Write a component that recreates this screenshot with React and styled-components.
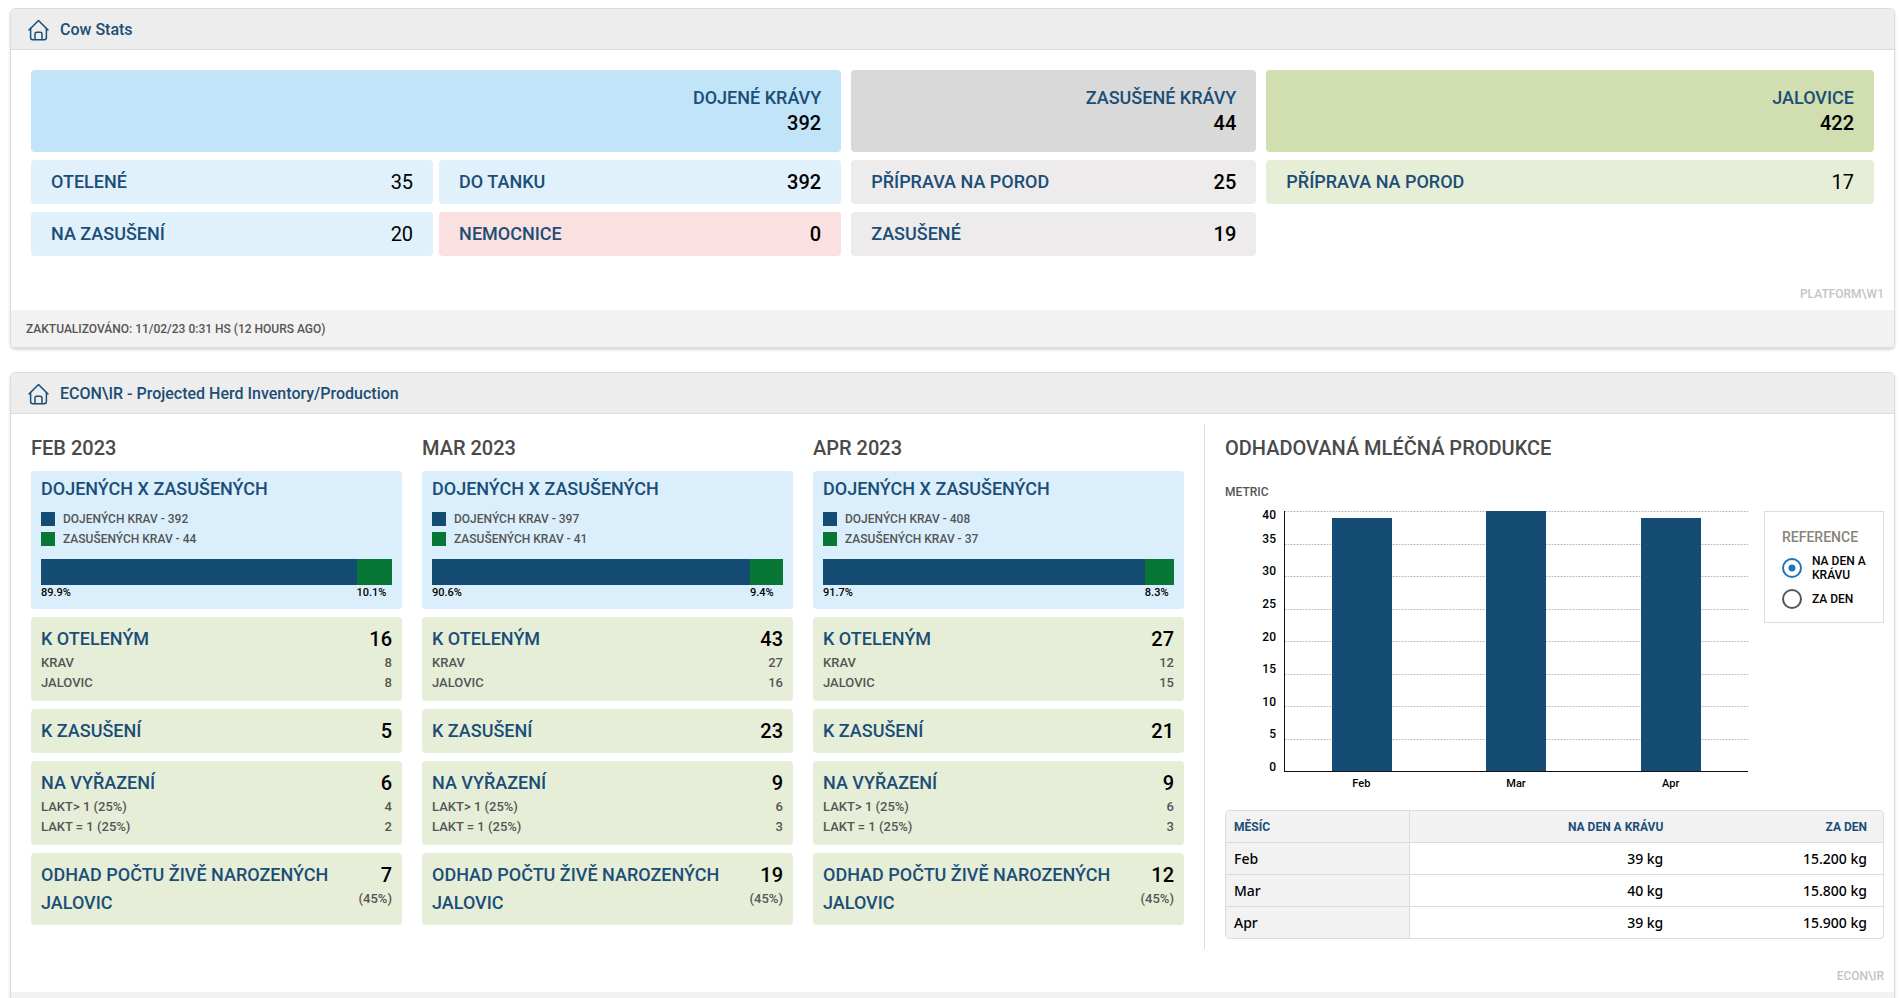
import React, { useState } from 'react';
import styled, { createGlobalStyle, css } from 'styled-components';

const color = {
  blue: '#1b4e77',
  bar: '#154c74',
  green: '#087735',
  line: '#dcdcdc',
  grey: '#555555',
};

const tones = {
  milking: '#c1e4f8',
  milkingSoft: '#e0f1fc',
  hospital: '#fae0e0',
  dry: '#d9d9d9',
  drySoft: '#edebeb',
  heifers: '#d1deaf',
  heifersSoft: '#e7eed8',
  ratio: '#daeffb',
};

const GlobalStyle = createGlobalStyle`
  *, *::before, *::after { box-sizing: border-box; }
  body {
    margin: 0;
    background: #fff;
    color: #000;
    font-family: Roboto, "Noto Sans", sans-serif;
    font-weight: 500;
  }
`;

const Page = styled.main`
  height: 100vh;
  overflow: hidden;
  padding: 8px 8px 0 10px;
  display: flex;
  flex-direction: column;
  gap: 24px;
`;

const Card = styled.section`
  flex: none;
  border: 1px solid ${color.line};
  border-radius: 5px;
  box-shadow: 0 2px 3px rgba(0, 0, 0, 0.15);
  overflow: hidden;
`;

const CardHeader = styled.header`
  display: flex;
  align-items: center;
  gap: 11px;
  height: 41px;
  padding: 1px 17px 0;
  background: #ededed;
  border-bottom: 1px solid ${color.line};
  color: ${color.blue};
`;

const CardTitle = styled.h2`
  margin: 0;
  font-size: 16px;
  line-height: 20px;
  font-weight: 500;
`;

const CardFooter = styled.footer`
  height: 37px;
  padding: 0 15px;
  background: #f2f2f2;
  color: ${color.grey};
  font-size: 12px;
  line-height: 38px;
`;

const Watermark = styled.div`
  margin-top: 20px;
  padding: 0 10px 9px;
  color: #c4c4c4;
  font-size: 12px;
  line-height: 14px;
  text-align: right;
`;

const Stats = styled.div`
  display: grid;
  grid-template-columns: 4fr 2fr 3fr;
  align-items: start;
  gap: 10px;
  padding: 20px 20px 11px;
`;

const StatGroup = styled.div`
  display: grid;
  grid-template-columns: repeat(${(p) => p.$columns}, 1fr);
  gap: 8px 6px;
`;

const StatTotal = styled.div`
  grid-column: 1 / -1;
  height: 82px;
  padding: 15px 20px;
  border-radius: 4px;
  background: ${(p) => tones[p.$tone]};
  text-align: right;
`;

const StatTile = styled.div`
  display: flex;
  align-items: center;
  justify-content: space-between;
  height: 44px;
  padding: 0 20px;
  border-radius: 4px;
  background: ${(p) => tones[p.$tone]};
`;

const Label = styled.div`
  color: ${color.blue};
  font-size: 18px;
  line-height: 26px;
`;

const Value = styled.div`
  font-size: 20px;
  line-height: 24px;
  font-weight: ${(p) => (p.$light ? 400 : 500)};
`;

const Projection = styled.div`
  display: grid;
  grid-template-columns: 69fr 40fr;
  padding: 10px 10px 0 20px;
`;

const Months = styled.div`
  display: grid;
  grid-template-columns: repeat(3, 1fr);
  gap: 20px;
  padding: 12px 20px 0 0;
`;

const Month = styled.section`
  display: flex;
  flex-direction: column;
  gap: 8px;
`;

const SectionTitle = styled.h3`
  margin: 0 0 ${(p) => (p.$tight ? 2 : 24)}px;
  color: #4a4a4a;
  font-size: 20px;
  line-height: 25px;
  font-weight: 500;
`;

const Panel = styled.div`
  border-radius: 4px;
  background: ${(p) => tones[p.$tone]};
  ${(p) =>
    p.$tone === 'ratio'
      ? css`padding: 5px 10px 8px;`
      : css`padding: 8px 10px;`}
`;

const RatioLegend = styled.ul`
  list-style: none;
  margin: 7px 0 10px;
  padding: 0;
`;

const RatioKey = styled.li`
  display: flex;
  align-items: center;
  gap: 8px;
  height: 20px;
  color: ${color.grey};
  font-size: 12px;

  &::before {
    content: '';
    width: 14px;
    height: 14px;
    background: ${(p) => color[p.$swatch]};
  }
`;

const Ratio = styled.div`
  display: flex;
`;

const RatioPart = styled.div`
  font-size: 11px;
  line-height: 16px;
  white-space: nowrap;

  &::before {
    content: '';
    display: block;
    height: 26px;
    background: ${(p) => color[p.$swatch]};
  }
`;

const PanelRow = styled.div`
  display: flex;
  justify-content: space-between;
  gap: 10px;
`;

const PanelLabel = styled.div`
  color: ${color.blue};
  font-size: 18px;
  line-height: 28px;
`;

const PanelValue = styled.div`
  text-align: right;
  font-size: 20px;
  line-height: 28px;
`;

const Detail = styled.div`
  display: flex;
  justify-content: space-between;
  color: ${color.grey};
  font-size: 13px;
  line-height: 20px;
`;

const Production = styled.section`
  border-left: 1px solid ${color.line};
  padding: 12px 0 10px 20px;
`;

const Metric = styled.div`
  margin-bottom: 12px;
  color: ${color.grey};
  font-size: 12px;
  line-height: 14px;
`;

const ChartRow = styled.div`
  display: flex;
  align-items: flex-start;
`;

const AxisValues = styled.div`
  width: 59px;
  height: 261px;
  padding-right: 8px;
  display: grid;
  grid-auto-rows: 1fr;
  font-size: 12px;
  line-height: 9px;
  text-align: right;
`;

const AxisStep = styled.div`
  display: flex;
  flex-direction: column;
  justify-content: ${(p) => (p.$top ? 'space-between' : 'flex-end')};
`;

const Chart = styled.div`
  flex: 1;
`;

const Plot = styled.div`
  display: grid;
  height: 261px;
  border-left: 1px solid #111;
  border-bottom: 1px solid #111;
`;

const GridLines = styled.div`
  grid-area: 1 / 1;
  display: grid;
  grid-auto-rows: 1fr;
`;

const GridLine = styled.div`
  background: repeating-linear-gradient(90deg, #b4b4b4 0 1px, #e6e6e6 1px 3px) top / 100% 1px no-repeat;
`;

const Bars = styled.div`
  grid-area: 1 / 1;
  display: grid;
  grid-template-columns: repeat(3, 1fr);
  align-items: end;
  justify-items: center;
  z-index: 1;
`;

const Bar = styled.div`
  width: 60px;
  background: ${color.bar};
`;

const MonthNames = styled.div`
  display: grid;
  grid-template-columns: repeat(3, 1fr);
  margin-top: 5px;
  font-size: 11px;
  line-height: 14px;
  text-align: center;
`;

const Reference = styled.fieldset`
  width: 120px;
  margin: 0 0 0 16px;
  padding: 15px 10px 13px 17px;
  border: 1px solid ${color.line};
  display: flex;
  flex-direction: column;
  gap: 7px;
`;

const ReferenceTitle = styled.div`
  color: #85857a;
  font-size: 14px;
  line-height: 20px;
`;

const Option = styled.label`
  display: flex;
  align-items: center;
  gap: 10px;
  min-height: 20px;
  font-size: 12px;
  line-height: 14px;
`;

const Radio = styled.input`
  appearance: none;
  flex: none;
  width: 20px;
  height: 20px;
  margin: 0;
  border: 2px solid #555;
  border-radius: 50%;

  &:checked {
    border-color: #1b75bb;
    background: radial-gradient(circle, #1b75bb 3px, transparent 4px);
  }
`;

const Table = styled.table`
  width: 100%;
  margin-top: 19px;
  table-layout: fixed;
  border: 1px solid ${color.line};
  border-radius: 4px;
  border-spacing: 0;
  overflow: hidden;
`;

const Cell = styled.td`
  height: 32px;
  padding: 0 16px;
  border-bottom: 1px solid ${color.line};
  font-family: "Noto Sans", sans-serif;
  font-size: 14px;
  line-height: 20px;
  font-weight: 500;
  text-align: right;

  tr:last-child > & {
    height: 31px;
    border-bottom: 0;
  }
`;

const HeadCell = styled.th`
  width: ${(p) => p.$width};
  height: 32px;
  padding: 0 16px;
  background: #f2f2f2;
  border-bottom: 1px solid ${color.line};
  color: ${color.blue};
  font-size: 12px;
  font-weight: 700;
  text-align: right;

  &:first-child {
    padding: 0 8px;
    border-right: 1px solid ${color.line};
    text-align: left;
  }
`;

const RowHead = styled(Cell).attrs({ as: 'th', scope: 'row' })`
  padding: 0 8px;
  background: #f2f2f2;
  border-right: 1px solid ${color.line};
  text-align: left;
`;

const HomeIcon = () => (
  <svg width="21" height="22" viewBox="0 0 21 22" fill="none" stroke="currentColor" strokeWidth="1.5" strokeLinecap="round" strokeLinejoin="round" aria-hidden="true">
    <path d="M1 11 L10.5 1.5 L20 11" />
    <path d="M2.6 9.6 V18.6 Q2.6 20.8 4.8 20.8 H16.2 Q18.4 20.8 18.4 18.6 V9.6" />
    <path d="M7 20.6 V15 Q7 13.2 8.8 13.2 H12.2 Q14 13.2 14 15 V20.6" />
  </svg>
);

const statGroups = [
  {
    columns: 2, tone: 'milking', label: 'DOJENÉ KRÁVY', value: 392,
    tiles: [
      { tone: 'milkingSoft', label: 'OTELENÉ', value: 35, light: true },
      { tone: 'milkingSoft', label: 'DO TANKU', value: 392 },
      { tone: 'milkingSoft', label: 'NA ZASUŠENÍ', value: 20, light: true },
      { tone: 'hospital', label: 'NEMOCNICE', value: 0 },
    ],
  },
  {
    columns: 1, tone: 'dry', label: 'ZASUŠENÉ KRÁVY', value: 44,
    tiles: [
      { tone: 'drySoft', label: 'PŘÍPRAVA NA POROD', value: 25 },
      { tone: 'drySoft', label: 'ZASUŠENÉ', value: 19 },
    ],
  },
  {
    columns: 1, tone: 'heifers', label: 'JALOVICE', value: 422,
    tiles: [{ tone: 'heifersSoft', label: 'PŘÍPRAVA NA POROD', value: 17, light: true }],
  },
];

const months = [
  { name: 'FEB 2023', milked: 392, dry: 44, ratio: [89.9, 10.1], calving: [16, 8, 8], toDry: 5, cull: [6, 4, 2], born: 7 },
  { name: 'MAR 2023', milked: 397, dry: 41, ratio: [90.6, 9.4], calving: [43, 27, 16], toDry: 23, cull: [9, 6, 3], born: 19 },
  { name: 'APR 2023', milked: 408, dry: 37, ratio: [91.7, 8.3], calving: [27, 12, 15], toDry: 21, cull: [9, 6, 3], born: 12 },
];

const production = [
  { month: 'Feb', perCow: 39, perDay: '15.200' },
  { month: 'Mar', perCow: 40, perDay: '15.800' },
  { month: 'Apr', perCow: 39, perDay: '15.900' },
];

const steps = [35, 30, 25, 20, 15, 10, 5, 0];

function SummaryPanel({ label, value, details = [], note }) {
  return (
    <Panel $tone="heifersSoft">
      <PanelRow>
        <PanelLabel>{label}</PanelLabel>
        <PanelValue>
          {value}
          {note && <Detail>{note}</Detail>}
        </PanelValue>
      </PanelRow>
      {details.map(([name, count]) => (
        <Detail key={name}>
          <span>{name}</span>
          <span>{count}</span>
        </Detail>
      ))}
    </Panel>
  );
}

function MonthColumn({ data }) {
  return (
    <Month>
      <SectionTitle $tight>{data.name}</SectionTitle>
      <Panel $tone="ratio">
        <Label>DOJENÝCH X ZASUŠENÝCH</Label>
        <RatioLegend>
          <RatioKey $swatch="bar">DOJENÝCH KRAV - {data.milked}</RatioKey>
          <RatioKey $swatch="green">ZASUŠENÝCH KRAV - {data.dry}</RatioKey>
        </RatioLegend>
        <Ratio>
          <RatioPart $swatch="bar" style={{ width: `${data.ratio[0]}%` }}>{data.ratio[0]}%</RatioPart>
          <RatioPart $swatch="green" style={{ width: `${data.ratio[1]}%` }}>{data.ratio[1]}%</RatioPart>
        </Ratio>
      </Panel>
      <SummaryPanel label="K OTELENÝM" value={data.calving[0]} details={[['KRAV', data.calving[1]], ['JALOVIC', data.calving[2]]]} />
      <SummaryPanel label="K ZASUŠENÍ" value={data.toDry} />
      <SummaryPanel label="NA VYŘAZENÍ" value={data.cull[0]} details={[['LAKT> 1 (25%)', data.cull[1]], ['LAKT = 1 (25%)', data.cull[2]]]} />
      <SummaryPanel label="ODHAD POČTU ŽIVĚ NAROZENÝCH JALOVIC" value={data.born} note="(45%)" />
    </Month>
  );
}

export default function App() {
  const [reference, setReference] = useState('cow');
  const peak = reference === 'cow' ? 40 : 16000;
  const amount = (p) => (reference === 'cow' ? p.perCow : Number(p.perDay) * 1000);

  return (
    <>
      <GlobalStyle />
      <Page>
        <Card>
          <CardHeader>
            <HomeIcon />
            <CardTitle>Cow Stats</CardTitle>
          </CardHeader>
          <Stats>
            {statGroups.map((g) => (
              <StatGroup key={g.label} $columns={g.columns}>
                <StatTotal $tone={g.tone}>
                  <Label>{g.label}</Label>
                  <Value>{g.value}</Value>
                </StatTotal>
                {g.tiles.map((t) => (
                  <StatTile key={t.label} $tone={t.tone}>
                    <Label>{t.label}</Label>
                    <Value $light={t.light}>{t.value}</Value>
                  </StatTile>
                ))}
              </StatGroup>
            ))}
          </Stats>
          <Watermark>PLATFORM\W1</Watermark>
          <CardFooter>ZAKTUALIZOVÁNO: 11/02/23 0:31 HS (12 HOURS AGO)</CardFooter>
        </Card>

        <Card>
          <CardHeader>
            <HomeIcon />
            <CardTitle>ECON\IR - Projected Herd Inventory/Production</CardTitle>
          </CardHeader>
          <Projection>
            <Months>
              {months.map((m) => <MonthColumn key={m.name} data={m} />)}
            </Months>
            <Production>
              <SectionTitle>ODHADOVANÁ MLÉČNÁ PRODUKCE</SectionTitle>
              <Metric>METRIC</Metric>
              <ChartRow>
                <AxisValues>
                  {steps.map((s, i) => (
                    <AxisStep key={s} $top={i === 0}>
                      {i === 0 && <span>40</span>}
                      <span>{s}</span>
                    </AxisStep>
                  ))}
                </AxisValues>
                <Chart>
                  <Plot>
                    <GridLines>
                      {steps.map((s) => <GridLine key={s} />)}
                    </GridLines>
                    <Bars>
                      {production.map((p) => (
                        <Bar key={p.month} style={{ height: `${(amount(p) / peak) * 100}%` }} />
                      ))}
                    </Bars>
                  </Plot>
                  <MonthNames>
                    {production.map((p) => <span key={p.month}>{p.month}</span>)}
                  </MonthNames>
                </Chart>
                <Reference aria-label="REFERENCE">
                  <ReferenceTitle>REFERENCE</ReferenceTitle>
                  <Option>
                    <Radio type="radio" name="reference" checked={reference === 'cow'} onChange={() => setReference('cow')} />
                    NA DEN A KRÁVU
                  </Option>
                  <Option>
                    <Radio type="radio" name="reference" checked={reference === 'day'} onChange={() => setReference('day')} />
                    ZA DEN
                  </Option>
                </Reference>
              </ChartRow>
              <Table>
                <thead>
                  <tr>
                    <HeadCell scope="col" $width="28%">MĚSÍC</HeadCell>
                    <HeadCell scope="col" $width="41%">NA DEN A KRÁVU</HeadCell>
                    <HeadCell scope="col" $width="31%">ZA DEN</HeadCell>
                  </tr>
                </thead>
                <tbody>
                  {production.map((p) => (
                    <tr key={p.month}>
                      <RowHead>{p.month}</RowHead>
                      <Cell>{p.perCow} kg</Cell>
                      <Cell>{p.perDay} kg</Cell>
                    </tr>
                  ))}
                </tbody>
              </Table>
            </Production>
          </Projection>
          <Watermark>ECON\IR</Watermark>
          <CardFooter />
        </Card>
      </Page>
    </>
  );
}
